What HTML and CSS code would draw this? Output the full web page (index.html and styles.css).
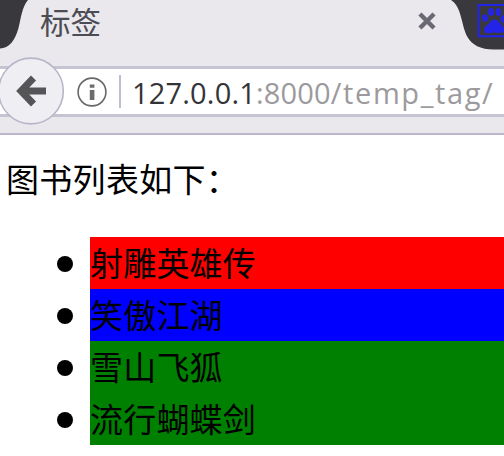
FILE: index.html
```
<!DOCTYPE html>
<html lang="zh-CN">
<head>
<meta charset="utf-8">
<title>标签</title>
<link rel="stylesheet" href="styles.css">
</head>
<body>
<header class="browser">
  <div class="tabs">
    <svg class="edge" width="28" height="49" viewBox="0 0 28 49"><path d="M0 0H28C22 7 21 18 18.5 28C15 41 9 48 0 48.5Z" fill="#38383d"/></svg>
    <span class="tab-title">标签</span>
    <svg class="close" width="18" height="18" viewBox="0 0 18 18"><path d="M3.5 3.5L14.5 14.5M14.5 3.5L3.5 14.5" stroke="#696873" stroke-width="4.4" stroke-linecap="square"/></svg>
    <svg class="next-tab" width="54" height="50" viewBox="0 0 54 50">
      <path d="M1 0H54V49.5H46C31 50 22 45 17.5 37C11 25 12 7 1 0Z" fill="#38383d"/>
      <g fill="#2424e8"><path d="M27.5 4H54V6H29.5V35.3H54V37.3H27.5Z"/><ellipse cx="35" cy="18" rx="2.8" ry="3.8"/><ellipse cx="41" cy="12" rx="2.9" ry="3.9"/><ellipse cx="48.3" cy="12" rx="2.7" ry="3.9"/><ellipse cx="53.5" cy="19" rx="3" ry="3.8"/><path d="M43.5 19.5C47 19 49 21.5 50.5 24C53 26 55 28 54 31C52.5 34 48 33 44 32.5C40 33 36 34.5 34.2 31.5C33 28.5 35.5 26 38 24.5C40 22.5 40.5 20 43.5 19.5Z"/></g>
    </svg>
  </div>
  <div class="nav">
    <div class="address">
      <svg class="info" width="30" height="30" viewBox="0 0 30 30"><circle cx="15" cy="15" r="13.9" fill="none" stroke="#68686c" stroke-width="1.6"/><path d="M12.8 7.5h4.6v3.2h-4.6zM12.8 13h4.6v10h-4.6z" fill="#6c6c6f"/></svg>
      <span class="divider"></span>
      <span class="url"><span class="host">127.0.0.1</span><span class="port">:8000</span><span class="path">/temp_tag/</span></span>
    </div>
    <svg class="back" width="66" height="68" viewBox="0 0 66 68"><ellipse cx="32" cy="34" rx="32.3" ry="32.9" fill="#efeef3" stroke="#b8b5c9" stroke-width="1.6"/><path d="M47 34H24M34.5 21L22 34L34.5 47" fill="none" stroke="#555558" stroke-width="7"/></svg>
  </div>
</header>
<main>
  <p>图书列表如下：</p>
  <ul>
    <li class="red">射雕英雄传</li>
    <li class="blue">笑傲江湖</li>
    <li class="green">雪山飞狐</li>
    <li class="green">流行蝴蝶剑</li>
  </ul>
</main>
</body>
</html>
```
FILE: styles.css
```
* { box-sizing: border-box; }
body {
  margin: 0;
  height: 456px;
  overflow: hidden;
  background: #fff;
  color: #000;
  font-family: "Noto Sans", "Noto Sans CJK SC", sans-serif;
}
svg { display: block; flex: none; }
.browser {
  height: 135px;
  background: #eae8ed;
  border-bottom: 2px solid #bab8ca;
}
.tabs { display: flex; height: 66px; }
.tab-title {
  margin-left: 12px;
  font-size: 30.5px;
  line-height: 45px;
  color: #4c4c54;
}
.close { margin: 12px 0 0 auto; }
.next-tab { margin-left: 14px; }
.nav { position: relative; height: 51px; }
.address {
  display: flex;
  align-items: center;
  height: 51px;
  padding-left: 77px;
  background: #fff;
  border-top: 3px solid #c6c3d2;
  border-bottom: 3px solid #c6c3d2;
}
.divider {
  width: 2px;
  height: 33px;
  margin: 0 11px 0 12px;
  background: #c0bdcd;
}
.url {
  padding-top: 2px;
  font-family: "Open Sans", "Noto Sans", sans-serif;
  font-size: 29px;
  line-height: 43px;
  letter-spacing: 0.18px;
  white-space: nowrap;
  color: #9c9a9d;
}
.host { color: #343438; font-weight: 500; }
.path { letter-spacing: 1.6px; }
.back { position: absolute; left: -1px; top: -9px; }
p {
  margin: 20px 0 0 6px;
  font-size: 33px;
  line-height: 50px;
  letter-spacing: 0.3px;
}
ul {
  margin: 32px 0 0;
  padding: 0 0 0 90px;
  list-style: none;
}
li {
  display: flex;
  align-items: center;
  height: 52px;
  padding-top: 2px;
  font-size: 33px;
  line-height: 50px;
  letter-spacing: 0.2px;
}
li::before {
  content: "";
  width: 16px;
  height: 16px;
  margin: 0 17px 0 -33px;
  border-radius: 50%;
  background: #000;
}
.red { background: #f00; }
.blue { background: #00f; }
.green { background: #008000; }
```
